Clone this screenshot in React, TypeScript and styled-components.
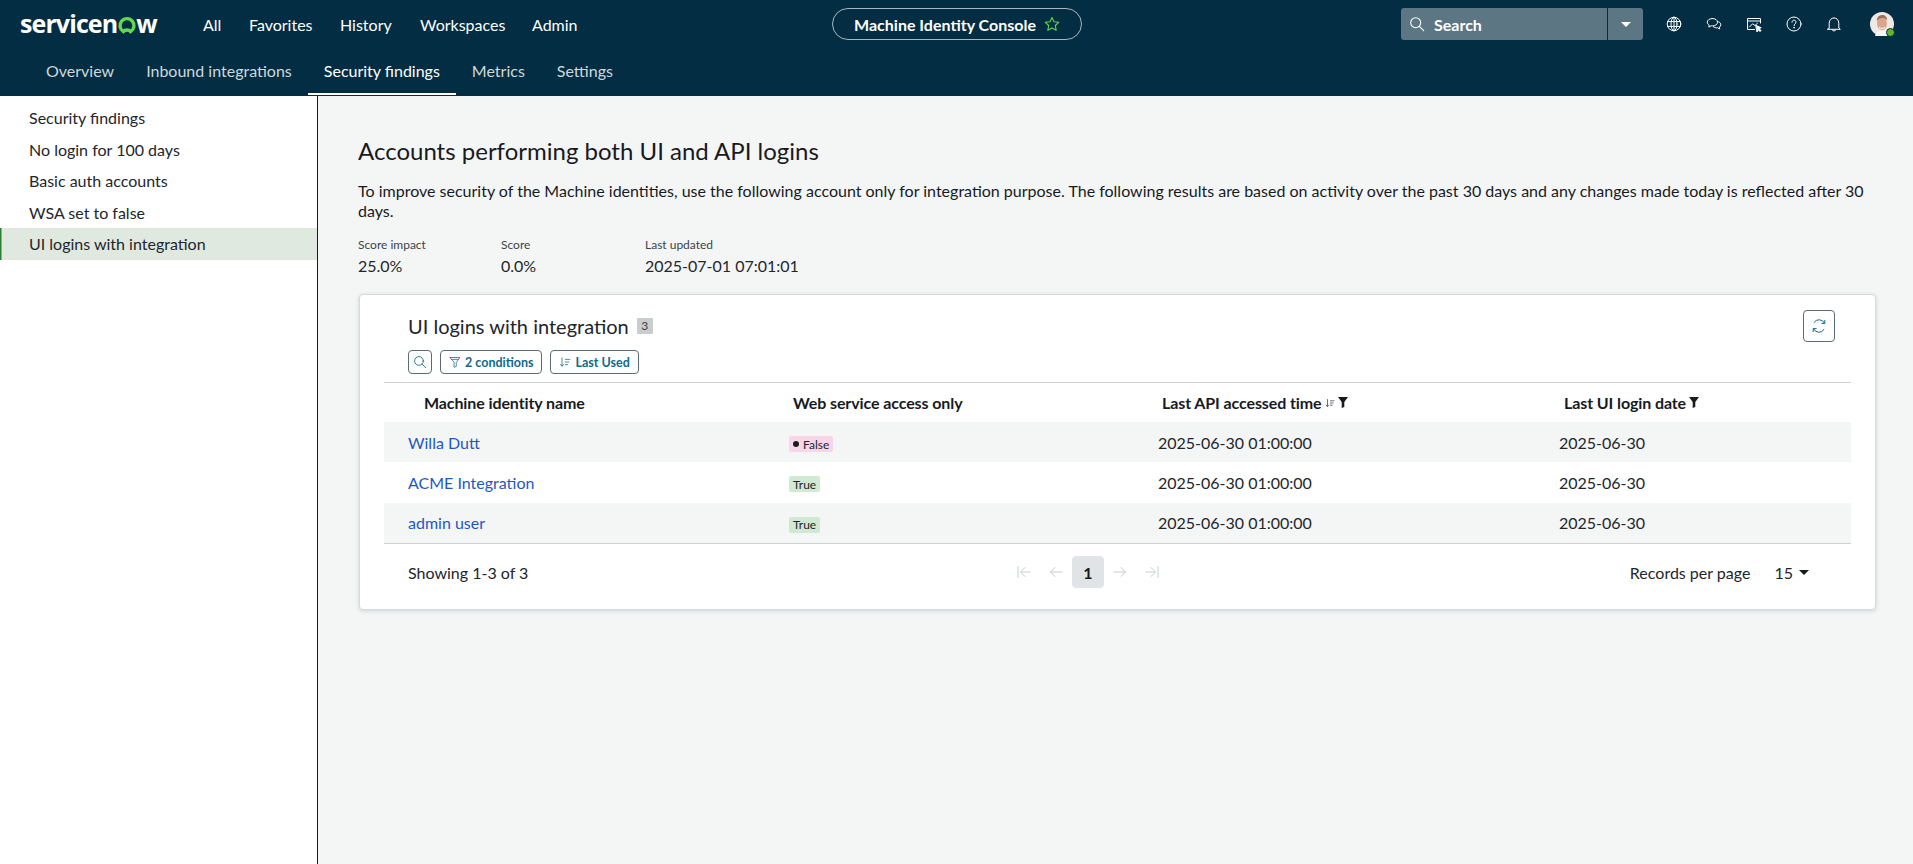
import React from "react";
import styled, { createGlobalStyle } from "styled-components";

const Global = createGlobalStyle`
  html, body { margin: 0; padding: 0; height: 100%; }
  body { font-family: Lato, "Open Sans", "Liberation Sans", sans-serif; color: #181a1f; background: #f4f6f5; overflow: hidden; }
  #root { height: 100%; }
  * { box-sizing: border-box; }
`;

const Page = styled.div`
  width: 1913px;
  height: 864px;
  display: flex;
  flex-direction: column;
`;
const Header = styled.header`
  height: 96px;
  background: #032d42;
  color: #fff;
  flex: none;
  display: flex;
  flex-direction: column;
`;
const TopRow = styled.div`
  height: 48px;
  display: flex;
  align-items: center;
`;
const Logo = styled.div`
  width: 203px;
  padding-left: 20px;
  font-family: "Open Sans", Lato, sans-serif;
  font-weight: 700;
  font-size: 25px;
  letter-spacing: -0.9px;
  line-height: 28px;
  flex: none;
  display: flex;
  align-items: center;
  color: #fff;
  margin-top: -2px;
`;
const Nav = styled.nav`
  width: 629px;
  flex: none;
  display: flex;
`;
const NavItem = styled.span<{ $w: number }>`
  width: ${(p) => p.$w}px;
  font-size: 16px;
  color: #fff;
`;
const Pill = styled.div`
  width: 250px;
  height: 32px;
  border: 1px solid #a9b7be;
  border-radius: 16px;
  display: flex;
  align-items: center;
  justify-content: center;
  gap: 8px;
  font-size: 16px;
  font-weight: 700;
  flex: none;
`;
const Search = styled.div`
  margin-left: 319px;
  width: 242px;
  height: 32px;
  background: #5c7683;
  border-radius: 3px;
  display: flex;
  flex: none;
  align-items: center;
`;
const SearchField = styled.div`
  width: 207px;
  height: 32px;
  padding-left: 8px;
  display: flex;
  align-items: center;
  gap: 9px;
  font-size: 16px;
  font-weight: 700;
  color: #fff;
  border-right: 1px solid #032d42;
`;
const SearchCaret = styled.div`
  flex: 1;
  display: flex;
  justify-content: center;
`;
const Caret = styled.i<{ $c?: string; $s?: number }>`
  display: block;
  width: 0;
  height: 0;
  border-left: ${(p) => p.$s ?? 5}px solid transparent;
  border-right: ${(p) => p.$s ?? 5}px solid transparent;
  border-top: ${(p) => p.$s ?? 5}px solid ${(p) => p.$c ?? "#fff"};
`;
const Tools = styled.div`
  margin-left: 23px;
  display: flex;
  gap: 24px;
  align-items: center;
  flex: none;
`;
const Avatar = styled.div`
  position: relative;
  margin-left: 28px;
  width: 24px;
  height: 24px;
  flex: none;
`;
const Presence = styled.span`
  position: absolute;
  right: -1px;
  bottom: -1px;
  width: 9px;
  height: 9px;
  border-radius: 50%;
  background: #62b32d;
  border: 1px solid #032d42;
`;
const Tabs = styled.div`
  height: 48px;
  padding-left: 30px;
  display: flex;
`;
const Tab = styled.div<{ $active?: boolean }>`
  padding: 0 16px;
  height: 47px;
  line-height: 46px;
  margin-top: 0;
  margin-right: ${(p) => (p.$active ? 0 : 0)}px;
  font-size: 16px;
  color: ${(p) => (p.$active ? "#fff" : "#cfd8dc")};
  border-bottom: 2px solid ${(p) => (p.$active ? "#fff" : "transparent")};
`;
const Body = styled.div`
  flex: 1;
  display: flex;
  min-height: 0;
`;
const Side = styled.aside`
  width: 318px;
  flex: none;
  background: #fff;
  border-right: 1px solid #181a1f;
  padding-top: 6px;
`;
const SideItem = styled.div<{ $active?: boolean }>`
  height: 31.5px;
  line-height: 31.5px;
  padding-left: 29px;
  font-size: 16px;
  color: #22262b;
  background: ${(p) => (p.$active ? "#e0e9e0" : "transparent")};
  box-shadow: ${(p) => (p.$active ? "inset 1.5px 0 0 #2f7d32" : "none")};
`;
const Main = styled.main`
  flex: 1;
  padding: 40px 37px 0 40px;
  min-width: 0;
`;
const Title = styled.h1`
  margin: 0;
  font-size: 24px;
  font-weight: 400;
  line-height: 30px;
  color: #181a1f;
`;
const Desc = styled.p`
  margin: 15px 0 0;
  font-size: 16px;
  line-height: 20px;
  color: #181a1f;
  width: 1510px;
`;
const Meta = styled.div`
  margin-top: 16px;
  display: flex;
`;
const MetaCol = styled.div<{ $w: number }>`
  width: ${(p) => p.$w}px;
`;
const MetaLabel = styled.div`
  font-size: 12px;
  line-height: 16px;
  color: #3c4248;
`;
const MetaValue = styled.div`
  font-size: 16px;
  line-height: 20px;
  margin-top: 3px;
  color: #22262b;
`;
const Card = styled.section`
  margin-top: 18px;
  margin-left: 1px;
  width: 1517px;
  height: 316px;
  background: #fff;
  border: 1px solid #d5dadd;
  border-radius: 4px;
  box-shadow: 0 1px 4px rgba(30, 50, 60, 0.18);
  padding: 0 24px;
`;
const CardHead = styled.div`
  height: 88px;
  padding: 15px 16px 0 24px;
  display: flex;
  justify-content: space-between;
  border-bottom: 1px solid #cfd3d6;
`;
const CardTitleRow = styled.div`
  display: flex;
  align-items: center;
  gap: 8px;
  height: 32px;
`;
const CardTitle = styled.h2`
  margin: 0;
  font-size: 20px;
  font-weight: 400;
  color: #22262b;
`;
const CountBadge = styled.span`
  width: 16px;
  height: 16px;
  background: #c9cdcf;
  border-radius: 1px;
  font-size: 12px;
  line-height: 16px;
  text-align: center;
  color: #3c4248;
`;
const Toolbar = styled.div`
  margin-top: 8px;
  display: flex;
  gap: 8px;
`;
const ToolButton = styled.button`
  height: 24px;
  min-width: 24px;
  padding: 0 8px;
  background: #fff;
  border: 1px solid #5b6c74;
  border-radius: 4px;
  display: flex;
  align-items: center;
  justify-content: center;
  gap: 4px;
  font: 700 12.5px Lato, sans-serif;
  color: #116a8a;
`;
const IconOnly = styled(ToolButton)`
  padding: 0;
  width: 24px;
`;
const Refresh = styled(ToolButton)`
  width: 32px;
  height: 32px;
  padding: 0;
`;
const Row = styled.div<{ $shade?: boolean; $head?: boolean }>`
  display: grid;
  grid-template-columns: 381px 369px 401px 1fr;
  height: ${(p) => (p.$head ? 39 : 40.3)}px;
  align-items: center;
  background: ${(p) => (p.$shade ? "#f4f6f5" : "transparent")};
`;
const HeadCell = styled.div<{ $pad: number }>`
  padding-left: ${(p) => p.$pad}px;
  font-size: 16px;
  font-weight: 700;
  color: #181a1f;
  display: flex;
  align-items: center;
  gap: 3px;
  letter-spacing: -0.1px;
`;
const Cell = styled.div`
  padding-left: 24px;
  font-size: 16px;
  color: #22262b;
`;
const LinkCell = styled.a`
  color: #1f57c3;
  text-decoration: none;
`;
const Tag = styled.span<{ $false?: boolean }>`
  display: inline-flex;
  align-items: center;
  gap: 4px;
  height: 16px;
  padding: 0 4px;
  font-size: 12px;
  border-radius: 2px;
  color: #22262b;
  background: ${(p) => (p.$false ? "#f8d5e8" : "#cfe9d3")};
  vertical-align: middle;
`;
const Dot = styled.i`
  width: 6px;
  height: 6px;
  border-radius: 50%;
  background: #181a1f;
`;
const Footer = styled.div`
  height: 58px;
  border-top: 1px solid #cfd3d6;
  padding: 0 42px 0 24px;
  display: grid;
  grid-template-columns: 600px 200px 1fr;
  align-items: center;
  font-size: 16px;
  color: #22262b;
`;
const Pager = styled.div`
  display: flex;
  align-items: center;
  margin-left: 0;
`;
const PageIcon = styled.span`
  width: 32px;
  height: 32px;
  display: flex;
  align-items: center;
  justify-content: center;
`;
const PageNum = styled.span`
  width: 32px;
  height: 32px;
  background: #e1e4e7;
  border-radius: 4px;
  font-weight: 700;
  display: flex;
  align-items: center;
  justify-content: center;
  color: #181a1f;
`;
const PerPage = styled.div`
  display: flex;
  align-items: center;
  justify-content: flex-end;
`;
const PerValue = styled.span`
  margin-left: 24px;
  font-weight: 700;
  font-weight: 400;
  display: flex;
  align-items: center;
  gap: 6px;
`;

const I = ({ children, s = 16, c = "#fff", w = 1 }: { children: React.ReactNode; s?: number; c?: string; w?: number }) => (
  <svg width={s} height={s} viewBox="0 0 16 16" fill="none" stroke={c} strokeWidth={w} strokeLinecap="round" strokeLinejoin="round">
    {children}
  </svg>
);

const FunnelSolid = () => (
  <svg width="10" height="11" viewBox="0 0 10 11"><path d="M0 0h10L6.3 5v5l-2.6 1V5z" fill="#181a1f" /></svg>
);
const SortIcon = ({ c = "#116a8a", s = 12 }: { c?: string; s?: number }) => (
  <I s={s} c={c}>
    <path d="M4 2.5v11M1.8 11.2 4 13.5l2.2-2.3M8.5 4.5h6M8.5 8h4.5M8.5 11.5h3" />
  </I>
);
const Muted = "#c8cdd0";

const sideItems = ["Security findings", "No login for 100 days", "Basic auth accounts", "WSA set to false", "UI logins with integration"];
const rows = [
  { name: "Willa Dutt", ok: false },
  { name: "ACME Integration", ok: true },
  { name: "admin user", ok: true },
];

export default function App() {
  return (
    <Page>
      <Global />
      <Header>
        <TopRow>
          <Logo>
            servicen
            <svg width="20" height="20" viewBox="0 0 20 20" style={{ margin: "3px -0.5px 0" }}>
              <path d="M6.4 16.6a7 7 0 1 1 7.2 0c-.9-1-2.1-1.6-3.6-1.6s-2.7.6-3.6 1.6z" fill="none" stroke="#62d84e" strokeWidth="3.4" />
            </svg>
            w
          </Logo>
          <Nav>
            <NavItem $w={46}>All</NavItem>
            <NavItem $w={91}>Favorites</NavItem>
            <NavItem $w={80}>History</NavItem>
            <NavItem $w={112}>Workspaces</NavItem>
            <NavItem $w={100}>Admin</NavItem>
          </Nav>
          <Pill>
            Machine Identity Console
            <svg width="16" height="16" viewBox="0 0 16 16" fill="none" stroke="#62d84e" strokeWidth="1.1" strokeLinejoin="round">
              <path d="M8 1.4l2 4.3 4.7.6-3.4 3.2.9 4.7L8 11.9l-4.2 2.3.9-4.7L1.3 6.3 6 5.7z" />
            </svg>
          </Pill>
          <Search>
            <SearchField>
              <I s={16} w={1.1}><circle cx="6.7" cy="6.7" r="5" /><path d="M10.4 10.4l4.3 4.3" /></I>
              Search
            </SearchField>
            <SearchCaret><Caret /></SearchCaret>
          </Search>
          <Tools>
            <I s={16}>
              <circle cx="8" cy="8" r="6.8" />
              <ellipse cx="8" cy="8" rx="3" ry="6.8" />
              <path d="M1.6 5.6h12.8M1.6 10.4h12.8M8 1.2v13.6" />
            </I>
            <I s={16}>
              <path d="M6.5 2.5c-3 0-5.2 1.6-5.2 3.7 0 1.2.7 2.2 1.9 2.9l-.4 2 2.4-1.3c.4.1.9.1 1.3.1 3 0 5-1.6 5-3.7s-2-3.7-5-3.7z" />
              <path d="M12.6 5.8c1.4.6 2.2 1.6 2.2 2.9 0 1-.5 1.8-1.4 2.4l.3 1.9-2.1-1.2c-1.7.2-3.2-.2-4.2-1.1" />
            </I>
            <I s={16}>
              <path d="M14.5 7V2.5h-13v11h7" />
              <path d="M1.5 5h13M3.5 11l3-3.2 2.5 1.7 2.5-2.3" />
              <path d="M10 9.5l5.2 2.2-2.2.9 2 2-1 1-2-2-.8 2.1z" fill="#fff" />
            </I>
            <I s={16}>
              <circle cx="8" cy="8" r="7" />
              <path d="M6 6.2c0-1.2.9-2 2-2s2 .8 2 1.9c0 1.800-2 1.800-2 3.600" />
              <circle cx="8" cy="11.7" r=".4" />
            </I>
            <I s={16}>
              <path d="M3.2 12V7.200c0-2.900 2-5.300 4.800-5.300s4.800 2.400 4.800 5.300V12l1.500 1.300H1.700z" />
              <path d="M6.500 14.500c.4.600 2.600.600 3 0" />
            </I>
          </Tools>
          <Avatar>
            <svg width="24" height="24" viewBox="0 0 24 24">
              <circle cx="12" cy="12" r="12" fill="#eee9e4" />
              <path d="M5 24c.5-4 3.500-5 7-5s6.500 1 7 5z" fill="#f7f7f5" />
              <ellipse cx="12" cy="11.500" rx="5" ry="6.500" fill="#d9a58c" />
              <path d="M6.800 9c0-4 2.500-6 5.400-6s5 2 5 5.500c-1.500-2-3-2.500-5-2.500-2.200 0-3.800 1-5.400 3z" fill="#9a7357" />
              <path d="M9 15.500c2 1.200 4 1.200 6 0" stroke="#fff" strokeWidth="1" fill="none" />
            </svg>
            <Presence />
          </Avatar>
        </TopRow>
        <Tabs>
          <Tab>Overview</Tab>
          <Tab>Inbound integrations</Tab>
          <Tab $active>Security findings</Tab>
          <Tab>Metrics</Tab>
          <Tab>Settings</Tab>
        </Tabs>
      </Header>
      <Body>
        <Side>
          {sideItems.map((s, i) => (
            <SideItem key={s} $active={i === 4}>{s}</SideItem>
          ))}
        </Side>
        <Main>
          <Title>Accounts performing both UI and API logins</Title>
          <Desc>
            To improve security of the Machine identities, use the following account only for integration purpose. The following results are based on activity over the past 30 days and any changes made today is reflected after 30 days.
          </Desc>
          <Meta>
            <MetaCol $w={143}><MetaLabel>Score impact</MetaLabel><MetaValue>25.0%</MetaValue></MetaCol>
            <MetaCol $w={144}><MetaLabel>Score</MetaLabel><MetaValue>0.0%</MetaValue></MetaCol>
            <MetaCol $w={200}><MetaLabel>Last updated</MetaLabel><MetaValue>2025-07-01 07:01:01</MetaValue></MetaCol>
          </Meta>
          <Card>
            <CardHead>
              <div>
                <CardTitleRow>
                  <CardTitle>UI logins with integration</CardTitle>
                  <CountBadge>3</CountBadge>
                </CardTitleRow>
                <Toolbar>
                  <IconOnly aria-label="Search">
                    <I s={14} c="#116a8a"><circle cx="6.800" cy="6.800" r="5" /><path d="M10.500 10.500l4 4" /></I>
                  </IconOnly>
                  <ToolButton>
                    <I s={12} c="#116a8a"><path d="M1.500 2h13L9.700 8.500V14l-3 1V8.500zM3.500 4.500h9" /></I>
                    2 conditions
                  </ToolButton>
                  <ToolButton>
                    <SortIcon />
                    Last Used
                  </ToolButton>
                </Toolbar>
              </div>
              <Refresh aria-label="Refresh">
                <I s={16} c="#116a8a">
                  <path d="M13.500 5.200A6 6 0 0 0 3 4.500M2.500 10.800A6 6 0 0 0 13 11.500" />
                  <path d="M13.800 2.400v3h-3M2.200 13.600v-3h3" />
                </I>
              </Refresh>
            </CardHead>
            <Row $head>
              <HeadCell $pad={40}>Machine identity name</HeadCell>
              <HeadCell $pad={28}>Web service access only</HeadCell>
              <HeadCell $pad={28}>Last API accessed time <SortIcon c="#181a1f" s={10} /><FunnelSolid /></HeadCell>
              <HeadCell $pad={29}>Last UI login date <FunnelSolid /></HeadCell>
            </Row>
            {rows.map((r, i) => (
              <Row key={r.name} $shade={i % 2 === 0}>
                <Cell><LinkCell href="#">{r.name}</LinkCell></Cell>
                <Cell>
                  {r.ok ? <Tag>True</Tag> : <Tag $false><Dot />False</Tag>}
                </Cell>
                <Cell>2025-06-30 01:00:00</Cell>
                <Cell>2025-06-30</Cell>
              </Row>
            ))}
            <Footer>
              <span>Showing 1-3 of 3</span>
              <Pager>
                <PageIcon><I s={16} c={Muted}><path d="M2 2.500v11M14 8H5M9 3.500 4.500 8 9 12.500" /></I></PageIcon>
                <PageIcon><I s={16} c={Muted}><path d="M14 8H2.500M7 3.500 2.500 8 7 12.500" /></I></PageIcon>
                <PageNum>1</PageNum>
                <PageIcon><I s={16} c={Muted}><path d="M2 8h11.500M9 3.500 13.500 8 9 12.500" /></I></PageIcon>
                <PageIcon><I s={16} c={Muted}><path d="M14 2.500v11M2 8h9M7 3.500 11.500 8 7 12.500" /></I></PageIcon>
              </Pager>
              <PerPage>
                Records per page
                <PerValue>15 <Caret $c="#181a1f" $s={5} /></PerValue>
              </PerPage>
            </Footer>
          </Card>
        </Main>
      </Body>
    </Page>
  );
}
